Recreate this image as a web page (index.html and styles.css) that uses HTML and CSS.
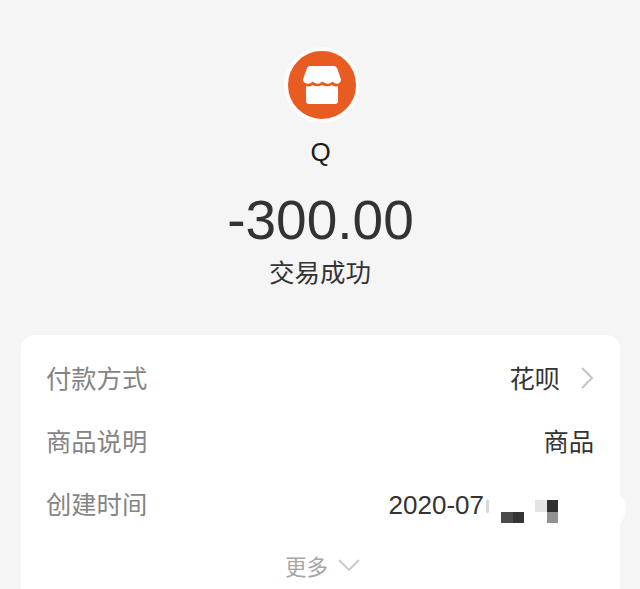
FILE: index.html
```html
<!DOCTYPE html>
<html lang="zh-CN">
<head>
<meta charset="utf-8">
<title>交易详情</title>
<link rel="stylesheet" href="styles.css">
</head>
<body>
<main class="page">
  <header class="summary">
    <div class="avatar">
      <svg class="shop" viewBox="0 0 38 38" width="38" height="38" aria-hidden="true">
        <path fill="#fff" d="M7 0H31Q33.500 0 34.200 2.500L38 13.500Q38 16.500 35.500 17.500Q32 18.500 29.500 15.500Q26.500 18.500 23.500 17.500Q21 17 19 15.500Q16.500 18.500 13.500 17.500Q11 17 9.500 15.500Q7 18.500 3.500 17.500Q0 16.500 0 13.500L3.800 2.500Q4.500 0 7 0Z"/>
        <path fill="#fff" d="M3 20Q7 21.500 9.500 19Q14 21.500 19 19Q24 21.500 29 19Q31.500 21.500 35 20V35Q35 38 32 38H6Q3 38 3 35Z"/>
      </svg>
    </div>
    <div class="name">Q</div>
    <div class="amount">-300.00</div>
    <div class="status">交易成功</div>
  </header>
  <section class="card">
    <div class="row">
      <span class="label">付款方式</span>
      <span class="value">花呗
        <svg class="chevron" viewBox="0 0 14 24" width="14" height="24" aria-hidden="true"><path d="M2 2L12 12L2 22" fill="none" stroke="#c4c4c4" stroke-width="2"/></svg>
      </span>
    </div>
    <div class="row">
      <span class="label">商品说明</span>
      <span class="value">商品</span>
    </div>
    <div class="row">
      <span class="label">创建时间</span>
      <span class="value date">2020-07<i class="fade"></i></span>
    </div>
    <div class="more">更多
      <svg viewBox="0 0 24 14" width="24" height="14" aria-hidden="true"><path d="M2 2L12 12L22 2" fill="none" stroke="#c8c8c8" stroke-width="1.800"/></svg>
    </div>
  </section>
</main>
<div class="smudge"></div>
<div class="mosaic" aria-hidden="true">
  <i></i><i></i><i></i><i class="light"></i><i class="dark"></i>
  <i class="mid1"></i><i class="mid2"></i><i></i><i></i><i class="gray"></i>
</div>
</body>
</html>
```
FILE: styles.css
```css
* { box-sizing: border-box; }
html, body { margin: 0; height: 589px; overflow: hidden; }
body {
  position: relative;
  background: #f5f5f5;
  color: #2e2e2e;
  font-family: "Liberation Sans", "Noto Sans CJK SC", sans-serif;
}
.page { padding: 47px 20px 0 21px; }
.summary { display: flex; flex-direction: column; align-items: center; height: 288px; }
.avatar {
  width: 76px; height: 76px; border-radius: 50%;
  background: #e85c22;
  border: 4px solid #fdfcfb;
  display: flex; align-items: center; justify-content: center;
  transform: translateX(1px);
}
.shop { display: block; }
.name { margin-top: 14px; font-size: 26px; line-height: 30px; color: #1c1c1c; }
.amount { margin-top: 22px; font-size: 55px; line-height: 62px; color: #333; }
.status { margin-top: 7px; margin-right: 1px; font-size: 25.500px; line-height: 30px; color: #333; }
.card {
  background: #fff;
  border-radius: 14px;
  padding: 13px 26px 0;
  height: 270px;
}
.row { display: flex; justify-content: space-between; align-items: center; height: 63px; margin-top: 0; transform: translateY(-3px); }
.label { font-size: 25.300px; color: #858585; margin-left: -1px; }
.value { display: flex; align-items: center; gap: 20px; font-size: 25.300px; color: #333; }
.date { font-size: 26px; margin-right: 105px; gap: 2px; transform: translateY(3px); }
.fade { display: block; width: 3px; height: 14px; background: #d8d8d8; border-radius: 2px; }
.chevron { display: block; transform: translateY(1px); }
.more {
  display: flex; justify-content: center; align-items: center; gap: 9px;
  height: 60px; padding-left: 5px; margin-top: -2px; font-size: 21.500px; color: #a6a6a6;
}
.smudge {
  position: absolute; left: 560px; top: 484px;
  width: 66px; height: 50px; border-radius: 50%;
  background: #fff;
}
.mosaic {
  position: absolute; left: 490px; top: 500px;
  display: grid; grid-template-columns: repeat(6, 11.330px); grid-auto-rows: 11.500px;
}
.mosaic i { display: block; }
.mosaic .light { grid-column: 5; background: #e4e4e4; }
.mosaic .dark { grid-column: 6; background: #2f2f2f; }
.mosaic .mid1 { grid-column: 2; background: #4a4a4a; }
.mosaic .mid2 { grid-column: 3; background: #353535; }
.mosaic .gray { grid-column: 6; background: #929292; }
```
